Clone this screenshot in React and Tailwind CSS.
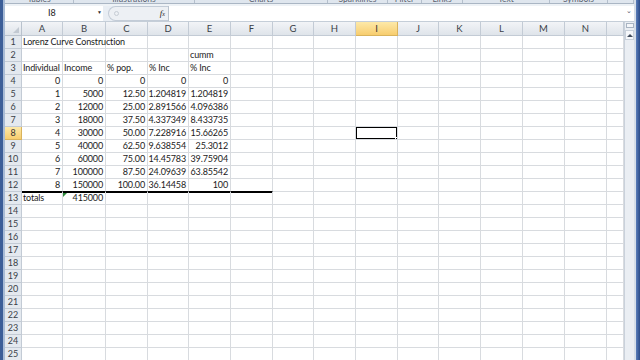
import React from "react";

const COLS = [
  { l: "A", w: 41 }, { l: "B", w: 43 }, { l: "C", w: 42 }, { l: "D", w: 41 },
  { l: "E", w: 42 }, { l: "F", w: 42 }, { l: "G", w: 41 }, { l: "H", w: 42 },
  { l: "I", w: 42 }, { l: "J", w: 41 }, { l: "K", w: 42 }, { l: "L", w: 42 },
  { l: "M", w: 42 }, { l: "N", w: 42 }, { l: "O", w: 17 },
];

const L = (t) => ({ t, a: "l" });
const R = (t) => ({ t, a: "r" });

const DATA = {
  1: { A: L("Lorenz Curve Construction") },
  2: { E: L("cumm") },
  3: { A: L("Individual"), B: L("Income"), C: L("% pop."), D: L("% Inc"), E: L("% Inc") },
  4: { A: R("0"), B: R("0"), C: R("0"), D: R("0"), E: R("0") },
  5: { A: R("1"), B: R("5000"), C: R("12.50"), D: R("1.204819"), E: R("1.204819") },
  6: { A: R("2"), B: R("12000"), C: R("25.00"), D: R("2.891566"), E: R("4.096386") },
  7: { A: R("3"), B: R("18000"), C: R("37.50"), D: R("4.337349"), E: R("8.433735") },
  8: { A: R("4"), B: R("30000"), C: R("50.00"), D: R("7.228916"), E: R("15.66265") },
  9: { A: R("5"), B: R("40000"), C: R("62.50"), D: R("9.638554"), E: R("25.3012") },
  10: { A: R("6"), B: R("60000"), C: R("75.00"), D: R("14.45783"), E: R("39.75904") },
  11: { A: R("7"), B: R("100000"), C: R("87.50"), D: R("24.09639"), E: R("63.85542") },
  12: { A: R("8"), B: R("150000"), C: R("100.00"), D: R("36.14458"), E: R("100") },
  13: { A: L("totals"), B: R("415000") },
};

const GROUPS = [
  { n: "Tables", w: 69 },
  { n: "Illustrations", w: 121 },
  { n: "Charts", w: 133 },
  { n: "Sparklines", w: 60 },
  { n: "Filter", w: 34 },
  { n: "Links", w: 41 },
  { n: "Text", w: 87 },
  { n: "Symbols", w: 58 },
  { n: "", w: 26 },
];

const FONT = { fontFamily: "Lato, 'Open Sans', 'Liberation Sans', sans-serif" };

function Cell({ row, col, idx }) {
  const d = (DATA[row] || {})[col.l];
  const underline12 = row === 12 && idx <= 5;
  const top13 = row === 13 && idx <= 5;
  const selected = row === 8 && col.l === "I";
  return (
    <div
      className={
        "relative h-[13px] border-r border-b whitespace-nowrap text-[9px] tracking-[-0.15px] leading-[12px] text-[#1b1b1b] " +
        (underline12 ? "border-b-black border-r-[#d8dbdf] " : "border-[#d8dbdf] ") +
        (top13 ? "shadow-[inset_0_1px_0_#000] " : "") +
        (d && d.a === "r" ? "text-right pr-[2px] " : "pl-[1px] ") +
        (d && d.t.length > 12 ? "overflow-visible z-10" : "overflow-hidden")
      }
    >
      {d ? d.t : ""}
      {row === 13 && col.l === "B" && (
        <div className="absolute left-0 top-[1px] w-0 h-0 border-t-[4px] border-t-[#2f8a3a] border-r-[4px] border-r-transparent" />
      )}
      {selected && (
        <div className="absolute left-[-1px] top-[-1px] w-[43px] h-[14px] border-2 border-black z-20">
          <div className="absolute right-[-3px] bottom-[-3px] w-[4px] h-[4px] bg-black border border-white" />
        </div>
      )}
    </div>
  );
}

export default function App() {
  const rows = Array.from({ length: 25 }, (_, i) => i + 1);
  return (
    <div className="w-[640px] h-[360px] overflow-hidden flex bg-white" style={FONT}>
      {/* left window border */}
      <div className="w-[3px] h-full bg-[#3c5e98]" />
      <div className="w-[2px] h-full bg-[#a8bbd5]" />

      <div className="flex flex-col w-[629px] h-full">
        {/* ribbon group labels (cut off) */}
        <div className="h-[4px] flex bg-[#dfe6ee] border-b border-[#aab6c4] overflow-hidden">
          {GROUPS.map((g, i) => (
            <div
              key={i}
              className="h-full shrink-0 border-r border-[#b4bfcc] flex justify-center"
              style={{ width: g.w }}
            >
              <span className="text-[8.5px] leading-[8px] mt-[-5px] text-[#5a6270]">{g.n}</span>
            </div>
          ))}
        </div>
        <div className="h-[2px] bg-[#eef2f6]" />

        {/* formula bar */}
        <div className="h-[15px] flex items-stretch bg-[#e9eef4]">
          <div className="w-[98px] shrink-0 bg-white relative">
            <span className="absolute left-[43px] top-[1px] text-[9px] leading-[12px] text-[#222]">I8</span>
            <span className="absolute right-[1px] top-[4px] text-[5px] text-[#333] leading-none">▼</span>
          </div>
          <div className="w-[60px] shrink-0 ml-[5px] flex items-center rounded-l-full bg-[#edf0f4] border border-[#c3ccd7] border-r-0 relative">
            <span className="ml-[5px] w-[5px] h-[5px] rounded-full border border-[#c6ccd4]" />
            <span className="ml-auto mr-[3px] text-[9px] italic text-[#222] leading-none" style={{ fontFamily: "'Liberation Serif', serif" }}>
              f<span className="text-[6px]">x</span>
            </span>
          </div>
          <div className="flex-1 bg-white border-l border-[#b9c3cf] relative">
            <span className="absolute right-[2px] top-[1px] text-[7px] text-[#556] leading-none">⌄</span>
          </div>
        </div>
        <div className="h-[1px] bg-[#c5ced8]" />

        <div className="flex flex-1 min-h-0">
          {/* grid */}
          <div
            className="grid w-[619px] content-start"
            style={{ gridTemplateColumns: "17px " + COLS.map((c) => c.w + "px").join(" ") }}
          >
            {/* header row */}
            <div className="h-[14px] bg-gradient-to-b from-[#f2f4f7] to-[#dfe4ea] border-r border-b border-[#b9c2cd] relative">
              <div className="absolute right-[2px] bottom-[2px] w-0 h-0 border-l-[6px] border-l-transparent border-b-[6px] border-b-[#c2c9d2]" />
            </div>
            {COLS.map((c) => (
              <div
                key={c.l}
                className={
                  "h-[14px] border-r border-b text-center text-[9.5px] leading-[13px] " +
                  (c.l === "I"
                    ? "bg-gradient-to-b from-[#fde9a8] to-[#f7cd6e] border-[#d9b35c] text-[#333]"
                    : "bg-gradient-to-b from-[#f2f4f7] to-[#dfe4ea] border-[#c3cbd5] text-[#3a3f47]")
                }
              >
                {c.l === "O" ? "" : c.l}
              </div>
            ))}
            {rows.map((r) => (
              <React.Fragment key={r}>
                <div
                  className={
                    "h-[13px] border-r border-b text-center text-[9px] leading-[12px] " +
                    (r === 8
                      ? "bg-gradient-to-b from-[#fde9a8] to-[#f7cd6e] border-[#d9b35c] text-[#333]"
                      : "bg-[#e4e9ef] border-[#c3cbd5] text-[#3a3f47]")
                  }
                >
                  {r}
                </div>
                {COLS.map((c, i) => (
                  <Cell key={c.l} row={r} col={c} idx={i} />
                ))}
              </React.Fragment>
            ))}
          </div>

          {/* vertical scrollbar */}
          <div className="w-[10px] h-full bg-[#eaeef3] border-l border-[#c9d1db] flex flex-col items-center">
            <div className="mt-[1px] w-[8px] h-[5px] border border-[#a9b4c2] bg-[#f4f6f9]" />
            <div className="mt-[2px] w-[9px] h-[10px] bg-[#f5f7fa] border border-[#c8d0da] flex items-center justify-center">
              <div className="w-0 h-0 border-l-[3px] border-r-[3px] border-b-[3px] border-l-transparent border-r-transparent border-b-[#3f4a5a]" />
            </div>
          </div>
        </div>
      </div>

      {/* right window border */}
      <div className="w-[2px] h-full bg-[#d6dee8]" />
      <div className="w-[4px] h-full bg-gradient-to-r from-[#5b7eba] to-[#2b4b88]" />
    </div>
  );
}
